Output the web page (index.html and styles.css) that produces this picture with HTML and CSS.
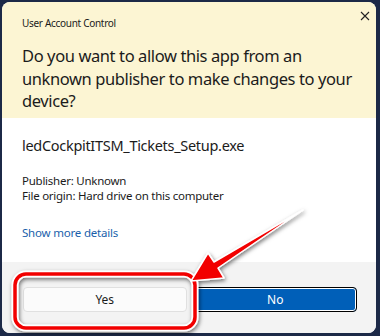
FILE: index.html
```html
<!DOCTYPE html>
<html lang="en">
<head>
  <meta charset="UTF-8" />
  <title>User Account Control</title>
  <link rel="stylesheet" href="styles.css">
</head>
<body>
<div class="dialog">
  <div class="header">
    <div class="title_row">
      <span class="title">User Account Control</span>
      <svg class="close" width="10" height="10" viewBox="0 0 10 10">
        <path d="M1 1L9 9M9 1L1 9" stroke="#222" stroke-width="1.1" />
      </svg>
    </div>
    <div class="question">Do you want to allow this app from an unknown publisher to make changes to your device?</div>
  </div>

  <div class="content">
    <div class="file_name">ledCockpitITSM_Tickets_Setup.exe</div>
    <div class="info">
      <div>Publisher: Unknown</div>
      <div>File origin: Hard drive on this computer</div>
    </div>
    <a class="details" href="#">Show more details</a>
  </div>

  <div class="footer">
    <button class="btn btn_yes" type="button">Yes</button>
    <button class="btn btn_no" type="button">No</button>
  </div>
</div>

<!-- red annotation drawn on top of the screenshot -->
<svg class="annotation" width="380" height="336" viewBox="0 0 380 336">
  <defs>
    <filter id="shadow" x="-20%" y="-20%" width="140%" height="140%">
      <feDropShadow dx="1" dy="2" stdDeviation="2" flood-color="#000" flood-opacity="0.55" />
    </filter>
  </defs>
  <g filter="url(#shadow)">
    <rect x="15" y="274" width="180" height="54" rx="11" fill="none" stroke="#fff" stroke-width="7" />
    <rect x="15" y="274" width="180" height="54" rx="11" fill="none" stroke="#f20000" stroke-width="3.5" />
    <polygon points="303,210 218,268 224,278 191,281 208,253 214,262"
             fill="#f20000" stroke="#fff" stroke-width="1.5" stroke-linejoin="round" />
  </g>
</svg>
</body>
</html>
```

FILE: styles.css
```css
*{box-sizing:border-box; margin:0; padding:0;}
body{width:380px; height:336px; background-color:#1c2947; overflow:hidden;
     font-family:"Noto Sans", "Open Sans", sans-serif; color:#1b1b1b;}

.dialog{margin:2px 4px 0 2px; height:331px; border-radius:8px; overflow:hidden;
        display:flex; flex-direction:column; background-color:#fff;}

.header{background-color:#fcf5d3; height:116px; padding:8px 6px 0 20px;}
.title_row{display:flex; justify-content:space-between; align-items:flex-start; height:22px;}
.title{font-size:10px; letter-spacing:-0.3px; margin-top:6px;}
.close{margin-top:1px;}
.question{font-size:16.5px; letter-spacing:-0.4px; line-height:22.5px; margin-top:13px;}

.content{flex:1; padding:17px 20px 0 20px;}
.file_name{font-size:14.5px; letter-spacing:-0.3px; line-height:20px;}
.info{font-size:11.5px; letter-spacing:-0.25px; line-height:15px; margin-top:18px;}
.details{display:block; margin-top:22px; font-size:11.5px; letter-spacing:-0.2px; color:#1a5fab; text-decoration:none;}

.footer{height:71px; background-color:#f3f3f3; display:flex; gap:7px; padding:25px 19px 0 21px;}
.btn{flex:1; height:25px; border-radius:4px; font-family:inherit; font-size:12px;}
.btn_yes{background-color:#fbfbfb; border:1px solid #e0e0e0; color:#1b1b1b;}
.btn_no{background-color:#005fb8; border:1px solid #000; box-shadow:inset 0 0 0 1px #fff; color:#fff;}

.annotation{position:absolute; left:0; top:0; pointer-events:none;}
```
